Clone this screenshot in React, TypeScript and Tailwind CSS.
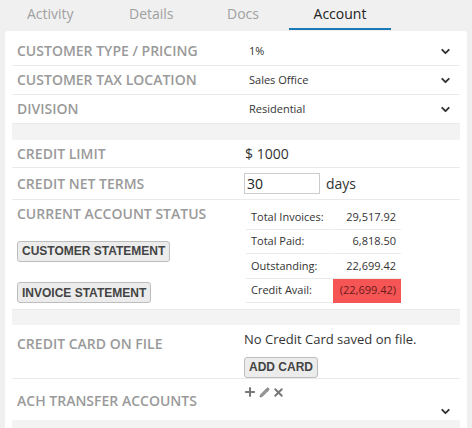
import { Plus, Pencil, X, ChevronDown } from 'lucide-react';

const font = { fontFamily: '"Open Sans", "Noto Sans", sans-serif' };

function Label({ children }: { children: React.ReactNode }) {
  return <div className="w-[227px] shrink-0 pl-[5px] text-[14px] font-semibold text-[#9a9a9a] uppercase leading-[20px]">{children}</div>;
}

function Btn({ children }: { children: React.ReactNode }) {
  return (
    <button className="rounded-[3px] border border-[#bdbdbd] bg-[#ececec] px-[4px] h-[21px] text-[12px] font-bold text-[#444] leading-none" style={{ fontFamily: '"Liberation Sans", Arial, sans-serif' }}>
      {children}
    </button>
  );
}

function Select({ label, value }: { label: string; value: string }) {
  return (
    <div className="flex h-[29px] items-center border-b border-[#eaeaea]">
      <Label>{label}</Label>
      <div className="flex-1 pl-[10px] text-[11px] text-[#333]">{value}</div>
      <ChevronDown className="mr-[8px] h-[13px] w-[13px] text-[#333]" strokeWidth={3.5} />
    </div>
  );
}

export default function App() {
  const stats = [
    ['Total Invoices:', '29,517.92'],
    ['Total Paid:', '6,818.50'],
    ['Outstanding:', '22,699.42'],
    ['Credit Avail:', '(22,699.42)'],
  ];
  return (
    <div className="h-[428px] w-[472px] overflow-hidden bg-[#f0f0f0]" style={font}>
      <div className="flex h-[31px] text-[14px] text-[#a0a0a0]">
        <div className="w-[97px] pt-[3px] pl-[27px]">Activity</div>
        <div className="w-[97px] pt-[3px] pl-[32px]">Details</div>
        <div className="w-[95px] pt-[3px] pl-[33px]">Docs</div>
        <div className="h-[30px] w-[102px] border-b-2 border-[#1a7ab5] pt-[3px] text-center text-[#222]">Account</div>
      </div>
      <div className="mx-[5px] rounded-[3px] bg-white px-[7px] pt-[6px]">
        <Select label="Customer Type / Pricing" value="1%" />
        <Select label="Customer Tax Location" value="Sales Office" />
        <Select label="Division" value="Residential" />
        <div className="h-[16px] bg-[#f3f3f3]" />
        <div className="flex h-[28px] items-center border-b border-[#eaeaea]">
          <Label>Credit Limit</Label>
          <div className="pl-[6px] text-[14px] text-[#333]">$ 1000</div>
        </div>
        <div className="flex h-[32px] items-center border-b border-[#eaeaea]">
          <Label>Credit Net Terms</Label>
          <input readOnly value="30" className="ml-[5px] h-[21px] w-[76px] border border-[#ccc] px-[2px] text-[14px] text-[#222] outline-none" />
          <span className="ml-[6px] text-[14px] text-[#333]">days</span>
        </div>
        <div className="flex h-[110px] border-b border-[#eaeaea]">
          <div className="w-[227px] shrink-0">
            <div className="pt-[4px]"><Label>Current Account Status</Label></div>
            <div className="mt-[13px] pl-[5px]"><Btn>CUSTOMER STATEMENT</Btn></div>
            <div className="mt-[17px] pl-[5px]"><Btn>INVOICE STATEMENT</Btn></div>
          </div>
          <div className="pt-[5px] pl-[7px]">
            {stats.map(([k, v], i) => (
              <div key={k} className="flex h-[24.5px] items-center text-[11px] text-[#333]">
                <div className="flex h-full w-[86px] items-center border-b border-[#eaeaea] pl-[5px]">{k}</div>
                <div className={`ml-[1px] flex h-full w-[68px] items-center justify-end border-b border-[#eaeaea] pr-[5px] ${i === 3 ? 'bg-[#f55555] text-[#6b1a1a] border-[#f55555]' : ''}`}>{v}</div>
              </div>
            ))}
          </div>
        </div>
        <div className="h-[15px] bg-[#f3f3f3]" />
        <div className="flex h-[54px] border-b border-[#eaeaea] pt-[5px]">
          <div className="pt-[4px]"><Label>Credit Card On File</Label></div>
          <div className="pl-[5px] text-[13px] text-[#333]">
            <div>No Credit Card saved on file.</div>
            <div className="mt-[7px]"><Btn>ADD CARD</Btn></div>
          </div>
        </div>
        <div className="flex h-[41px] pt-[6px]">
          <div className="pt-[6px]"><Label>ACH Transfer Accounts</Label></div>
          <div className="flex flex-1 flex-col pl-[4px]">
            <div className="flex items-center gap-[2px] text-[#777]">
              <Plus className="h-[14px] w-[14px]" strokeWidth={3.5} />
              <Pencil className="h-[11px] w-[11px]" fill="#999" strokeWidth={1.5} />
              <X className="h-[13px] w-[13px]" strokeWidth={3.5} />
            </div>
            <ChevronDown className="ml-auto mr-[8px] mt-[6px] h-[13px] w-[13px] text-[#333]" strokeWidth={3.5} />
          </div>
        </div>
        <div className="h-[10px] bg-[#f3f3f3]" />
      </div>
    </div>
  );
}
